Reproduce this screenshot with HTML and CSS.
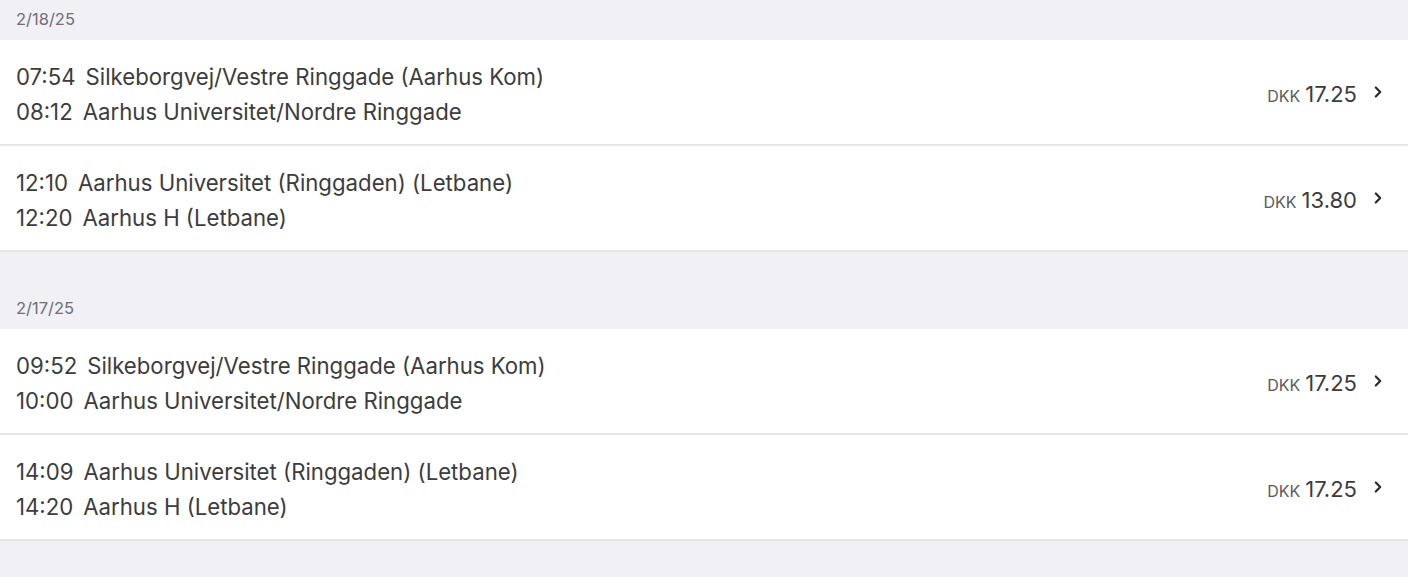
FILE: index.html
```html
<!DOCTYPE html>
<html lang="da">
<head>
<meta charset="utf-8">
<title>Rejser</title>
<link rel="stylesheet" href="styles.css">
</head>
<body>
<div class="list">
  <section class="group">
    <div class="date">2/18/25</div>
    <div class="rows">
      <div class="row">
        <div class="legs">
          <div class="leg"><span class="time">07:54</span><span class="stop">Silkeborgvej/Vestre Ringgade (Aarhus Kom)</span></div>
          <div class="leg"><span class="time">08:12</span><span class="stop">Aarhus Universitet/Nordre Ringgade</span></div>
        </div>
        <div class="price"><span class="cur">DKK</span><span class="amt">17.25</span>
          <svg class="chev" viewBox="0 0 12 14" width="12" height="14"><path d="M3.8 2.5 L8.2 7 L3.8 11.5" fill="none" stroke="#2c2c2e" stroke-width="2.2" stroke-linecap="round" stroke-linejoin="round"/></svg>
        </div>
      </div>
      <div class="row">
        <div class="legs">
          <div class="leg"><span class="time">12:10</span><span class="stop">Aarhus Universitet (Ringgaden) (Letbane)</span></div>
          <div class="leg"><span class="time">12:20</span><span class="stop">Aarhus H (Letbane)</span></div>
        </div>
        <div class="price"><span class="cur">DKK</span><span class="amt">13.80</span>
          <svg class="chev" viewBox="0 0 12 14" width="12" height="14"><path d="M3.8 2.5 L8.2 7 L3.8 11.5" fill="none" stroke="#2c2c2e" stroke-width="2.2" stroke-linecap="round" stroke-linejoin="round"/></svg>
        </div>
      </div>
    </div>
  </section>
  <section class="group">
    <div class="date">2/17/25</div>
    <div class="rows">
      <div class="row">
        <div class="legs">
          <div class="leg"><span class="time">09:52</span><span class="stop">Silkeborgvej/Vestre Ringgade (Aarhus Kom)</span></div>
          <div class="leg"><span class="time">10:00</span><span class="stop">Aarhus Universitet/Nordre Ringgade</span></div>
        </div>
        <div class="price"><span class="cur">DKK</span><span class="amt">17.25</span>
          <svg class="chev" viewBox="0 0 12 14" width="12" height="14"><path d="M3.8 2.5 L8.2 7 L3.8 11.5" fill="none" stroke="#2c2c2e" stroke-width="2.2" stroke-linecap="round" stroke-linejoin="round"/></svg>
        </div>
      </div>
      <div class="row">
        <div class="legs">
          <div class="leg"><span class="time">14:09</span><span class="stop">Aarhus Universitet (Ringgaden) (Letbane)</span></div>
          <div class="leg"><span class="time">14:20</span><span class="stop">Aarhus H (Letbane)</span></div>
        </div>
        <div class="price"><span class="cur">DKK</span><span class="amt">17.25</span>
          <svg class="chev" viewBox="0 0 12 14" width="12" height="14"><path d="M3.8 2.5 L8.2 7 L3.8 11.5" fill="none" stroke="#2c2c2e" stroke-width="2.2" stroke-linecap="round" stroke-linejoin="round"/></svg>
        </div>
      </div>
    </div>
  </section>
</div>
</body>
</html>
```
FILE: styles.css
```css
* { box-sizing: border-box; }
html, body {
  margin: 0;
  padding: 0;
  background: #f0f0f5;
  font-family: "Inter", "Noto Sans", sans-serif;
  color: #3c3c3e;
}
.list {
  display: flex;
  flex-direction: column;
  gap: 37px;
}
.date {
  height: 40px;
  padding: 8px 16px 0;
  font-size: 16.5px;
  line-height: 22px;
  color: #6e6e73;
}
.rows {
  display: flex;
  flex-direction: column;
}
.row {
  background: #fff;
  height: 106px;
  border-bottom: 2px solid #e4e4e9;
  display: flex;
  align-items: center;
  justify-content: space-between;
  padding: 4px 24px 0 16px;
}
.legs {
  display: flex;
  flex-direction: column;
}
.leg {
  font-size: 22.2px;
  line-height: 35px;
  white-space: nowrap;
}
.time { margin-right: 10px; }
.price {
  display: flex;
  align-items: center;
}
.cur {
  font-size: 16px;
  color: #5a5a5e;
  margin-right: 5px;
  padding-top: 3px;
}
.amt {
  font-size: 22px;
  color: #3c3c3e;
  margin-right: 15px;
}
.chev { display: block; margin-top: -4px; }
```
